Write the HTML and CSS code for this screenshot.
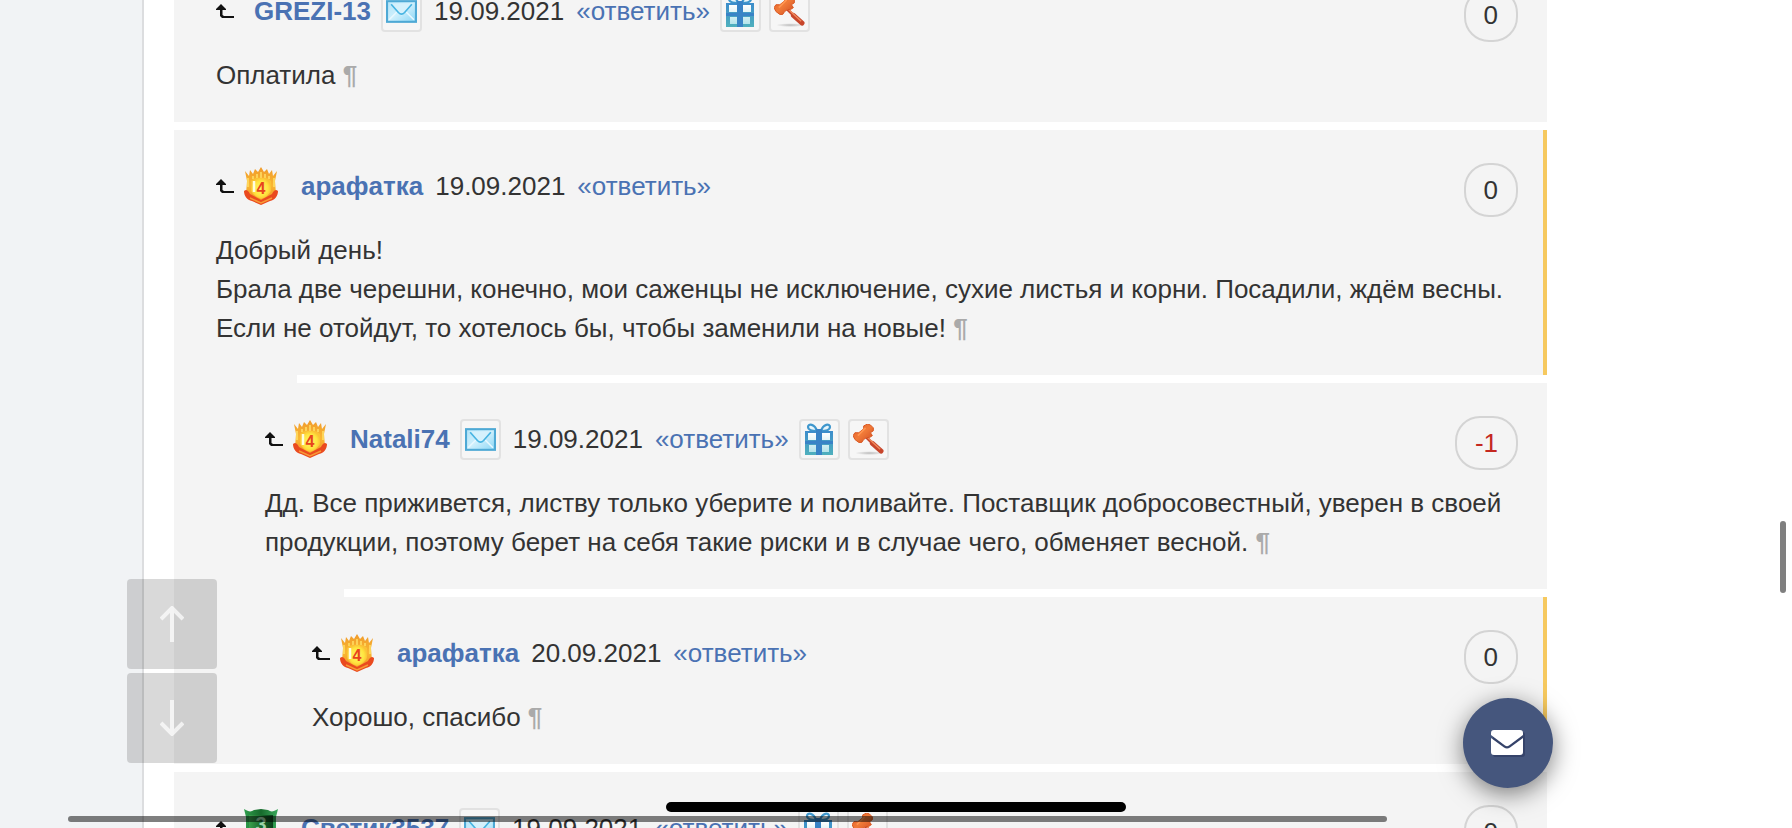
FILE: index.html
```html
<!DOCTYPE html>
<html lang="ru">
<head>
<meta charset="utf-8">
<title>Комментарии</title>
<link rel="stylesheet" href="styles.css">
</head>
<body>
<svg class="defs" aria-hidden="true">
  <defs>
    <linearGradient id="mailFill" x1="0" y1="0" x2="1" y2="1"><stop offset="0" stop-color="#b4e4f8"/><stop offset=".5" stop-color="#cdeffc"/><stop offset="1" stop-color="#8ad6f5"/></linearGradient>
    <linearGradient id="giftFill" x1="0" y1="0" x2="0" y2="1"><stop offset="0" stop-color="#3c8ccb"/><stop offset="1" stop-color="#4fb0bd"/></linearGradient>
    <linearGradient id="giftPane" x1="0" y1="0" x2="0" y2="1"><stop offset="0" stop-color="#ffffff"/><stop offset="1" stop-color="#b4e3ea"/></linearGradient>
    <linearGradient id="crest" x1="0" y1="0" x2="0" y2="1"><stop offset="0" stop-color="#f09a2a"/><stop offset=".5" stop-color="#f9b733"/><stop offset="1" stop-color="#f28a25"/></linearGradient>
    <radialGradient id="gold"><stop offset="0" stop-color="#fff36b"/><stop offset=".7" stop-color="#ffe53f"/><stop offset="1" stop-color="#fbc235"/></radialGradient>
    <linearGradient id="green" x1="0" y1="0" x2="1" y2="0"><stop offset="0" stop-color="#2f9e4d"/><stop offset=".5" stop-color="#176b2c"/><stop offset="1" stop-color="#39a95b"/></linearGradient>
    <linearGradient id="greenField" x1="0" y1="0" x2="1" y2="0"><stop offset="0" stop-color="#3aa04c"/><stop offset=".6" stop-color="#145f27"/><stop offset="1" stop-color="#0c3f1b"/></linearGradient>
    <linearGradient id="wood" x1="0" y1="0" x2="1" y2="1"><stop offset="0" stop-color="#e4602a"/><stop offset=".5" stop-color="#f07a38"/><stop offset="1" stop-color="#d04a22"/></linearGradient>
    <radialGradient id="shade"><stop offset="0" stop-color="#bbb"/><stop offset="1" stop-color="#bbb" stop-opacity="0"/></radialGradient>
    <symbol id="up" viewBox="0 0 18 14"><path d="M5 0 10 5V6H6.500V11L8 12H18V14H6L4 12V6H0V5Z"/></symbol>
    <symbol id="mail" viewBox="0 0 30 22">
      <rect x="1" y="1" width="28" height="20" fill="url(#mailFill)" stroke="#4ea9d5" stroke-width="2"/>
      <path d="M3 19 11 11M27 19 19 11" stroke="#e8f8ff" stroke-width="1.500"/>
      <path d="M4 3H26L15 15Z" fill="#d5f1fc"/>
      <path d="M5 4 12 12Q15 15 18 12L25 4" fill="none" stroke="#47b4e2" stroke-width="1.600"/>
    </symbol>
    <symbol id="gift" viewBox="0 0 28 32">
      <path d="M12 8C10 1 3 0 3 4c0 3 4 4 9 4M16 8c2-7 9-8 9-4 0 3-4 4-9 4" fill="#e7f5fb" stroke="#3f97cd" stroke-width="2.200"/>
      <rect x="0" y="8" width="28" height="24" fill="url(#giftFill)"/>
      <path d="M3 10H11V17H3ZM17 10H25V17H17ZM4 22H11V29H4ZM17 22H24V29H17Z" fill="url(#giftPane)"/>
      <path d="M11 6H17V32H11Z M0 18H28V21H0Z" fill="#3983c6"/>
    </symbol>
    <symbol id="gavel" viewBox="0 0 32 32">
      <ellipse cx="17" cy="30" rx="15" ry="2" fill="url(#shade)"/>
      <path d="M14 14 21 21" stroke="#c7452b" stroke-width="3"/>
      <path d="M20 20 29 28" stroke="#c7452b" stroke-width="5" stroke-linecap="round"/>
      <path d="M15 14 28 26" stroke="#f08a5c" stroke-width="1.500"/>
      <path d="M11 2 15 0 18 1 21 4 21 7 18 9 20 12 17 14 14 14 11 16 9 19 6 19 2 16 0 12 2 9 6 9 11 5Z" fill="url(#wood)" stroke="#d9561f" stroke-width="1"/>
      <path d="M5 12 13 4" stroke="#ff9550" stroke-width="2"/>
    </symbol>
    <symbol id="rank4" viewBox="0 0 34 38">
      <path d="M1 4 5 9 6 3 9 7 11 2 14 5 17 0 20 5 23 2 25 7 28 3 29 9 33 4 31 14 32 27 28 32 17 37 6 32 2 27 3 14Z" fill="url(#crest)"/>
      <path d="M9 9V12M13 7V11M17 5V11M21 7V11M25 9V12M4 11V20M30 11V20" stroke="#ffe066" stroke-width="1.500"/>
      <path d="M0 24C3 21 5 25 6 27L17 33 28 27C29 25 31 21 34 24 34 29 31 33 26 34L17 38 8 34C3 33 0 29 0 24Z" fill="#ea4a1f"/>
      <path d="M6 31 17 36 28 31" stroke="#f79a35" stroke-width="1.500" fill="none"/>
      <path d="M7 14Q11 10 17 11 23 10 27 14V24Q25 29 17 32 9 29 7 24Z" fill="url(#gold)"/>
      <path d="M10 14V25" stroke="#fffde0" stroke-width="2.500"/>
      <text x="17" y="27" class="rank-digit rank-digit-red">4</text>
    </symbol>
    <symbol id="rank3" viewBox="0 0 34 38">
      <path d="M0 0C5 3 7 3 10 1L17 0 24 1C27 3 29 3 34 0L32 8V26C32 32 22 33 17 38 12 33 2 32 2 26V8Z" fill="url(#green)"/>
      <path d="M5 6H29V26L17 33 5 26Z" fill="url(#greenField)"/>
      <text x="17" y="22" class="rank-digit rank-digit-pale">3</text>
    </symbol>
  </defs>
</svg>

<div class="page">
  <aside class="sidebar"></aside>
  <main class="thread">
    <article class="comment">
      <header class="head">
        <div class="meta">
          <a class="parent" href="#" aria-label="К родительскому"><svg class="i-up"><use href="#up"/></svg></a>
          <a class="name name-plain" href="#">GREZI-13</a>
          <button class="tool" aria-label="Написать"><svg class="i-mail"><use href="#mail"/></svg></button>
          <time>19.09.2021</time>
          <a class="reply" href="#">«ответить»</a>
          <button class="tool" aria-label="Подарок"><svg class="i-gift"><use href="#gift"/></svg></button>
          <button class="tool tool-next" aria-label="Жалоба"><svg class="i-gavel"><use href="#gavel"/></svg></button>
        </div>
        <span class="score">0</span>
      </header>
      <p class="text">Оплатила <a class="anchor" href="#">¶</a></p>
    </article>
    <div class="divider"></div>
    <article class="comment author">
      <header class="head">
        <div class="meta">
          <a class="parent" href="#" aria-label="К родительскому"><svg class="i-up"><use href="#up"/></svg></a>
          <svg class="rank"><use href="#rank4"/></svg>
          <a class="name" href="#">арафатка</a>
          <time>19.09.2021</time>
          <a class="reply" href="#">«ответить»</a>
        </div>
        <span class="score">0</span>
      </header>
      <p class="text">Добрый день!<br>Брала две черешни, конечно, мои саженцы не исключение, сухие листья и корни. Посадили, ждём весны. Если не отойдут, то хотелось бы, чтобы заменили на новые! <a class="anchor" href="#">¶</a></p>
    </article>
    <div class="divider divider-2"></div>
    <article class="comment level-2">
      <header class="head">
        <div class="meta">
          <a class="parent" href="#" aria-label="К родительскому"><svg class="i-up"><use href="#up"/></svg></a>
          <svg class="rank"><use href="#rank4"/></svg>
          <a class="name" href="#">Natali74</a>
          <button class="tool" aria-label="Написать"><svg class="i-mail"><use href="#mail"/></svg></button>
          <time>19.09.2021</time>
          <a class="reply" href="#">«ответить»</a>
          <button class="tool" aria-label="Подарок"><svg class="i-gift"><use href="#gift"/></svg></button>
          <button class="tool tool-next" aria-label="Жалоба"><svg class="i-gavel"><use href="#gavel"/></svg></button>
        </div>
        <span class="score negative">-1</span>
      </header>
      <p class="text">Дд. Все приживется, листву только уберите и поливайте. Поставщик добросовестный, уверен в своей продукции, поэтому берет на себя такие риски и в случае чего, обменяет весной. <a class="anchor" href="#">¶</a></p>
    </article>
    <div class="divider divider-3"></div>
    <article class="comment level-3 author">
      <header class="head">
        <div class="meta">
          <a class="parent" href="#" aria-label="К родительскому"><svg class="i-up"><use href="#up"/></svg></a>
          <svg class="rank"><use href="#rank4"/></svg>
          <a class="name" href="#">арафатка</a>
          <time>20.09.2021</time>
          <a class="reply" href="#">«ответить»</a>
        </div>
        <span class="score">0</span>
      </header>
      <p class="text">Хорошо, спасибо <a class="anchor" href="#">¶</a></p>
    </article>
    <div class="divider"></div>
    <article class="comment">
      <header class="head">
        <div class="meta">
          <a class="parent" href="#" aria-label="К родительскому"><svg class="i-up"><use href="#up"/></svg></a>
          <svg class="rank"><use href="#rank3"/></svg>
          <a class="name" href="#">Светик3537</a>
          <button class="tool" aria-label="Написать"><svg class="i-mail"><use href="#mail"/></svg></button>
          <time>19.09.2021</time>
          <a class="reply" href="#">«ответить»</a>
          <button class="tool" aria-label="Подарок"><svg class="i-gift"><use href="#gift"/></svg></button>
          <button class="tool tool-next" aria-label="Жалоба"><svg class="i-gavel"><use href="#gavel"/></svg></button>
        </div>
        <span class="score">0</span>
      </header>
    </article>
  </main>
</div>

<nav class="jump">
  <button class="jump-btn" aria-label="Наверх"><svg class="i-jump" viewBox="0 0 24 36"><path d="M12 36V2M1 13 12 2 23 13"/></svg></button>
  <button class="jump-btn" aria-label="Вниз"><svg class="i-jump" viewBox="0 0 24 36"><path d="M12 0V34M1 23 12 34 23 23"/></svg></button>
</nav>
<button class="chat" aria-label="Сообщения">
  <svg class="i-chat" viewBox="0 0 34 27"><path class="i-chat-shadow" d="M4 2H31Q34 2 34 5V24Q34 27 31 27H4Q2 27 2 24V5Q2 2 4 2Z"/><path fill="#fff" d="M3 0H29Q32 0 32 3V5L18 15.500Q16 17 14 15.500L0 5V3Q0 0 3 0ZM0 8 13 17.500Q16 19.500 19 17.500L32 8V22Q32 25 29 25H3Q0 25 0 22Z"/></svg>
</button>
<div class="home-bar"></div>
<div class="scroll-x"></div>
<div class="scroll-y"></div>
</body>
</html>
```
FILE: styles.css
```css
* { box-sizing: border-box; }

body {
  margin: 0;
  height: 100vh;
  overflow: hidden;
  background: #fff;
  color: #333;
  font: 26px/39px "Liberation Sans", Arial, sans-serif;
}

a { color: #4a72b3; text-decoration: none; }
button { padding: 0; border: 0; background: none; cursor: pointer; }
svg { display: block; flex: none; }

.defs { position: absolute; width: 0; height: 0; }

.page { display: flex; height: 100%; overflow: hidden; }

.sidebar {
  flex: 0 0 144px;
  background: #f1f3f5;
  border-right: 2px solid #dcdddf;
}

.thread {
  flex: 1;
  align-self: flex-start;
  margin: -45px 245px 0 30px;
  background: #f4f4f4;
}

.comment { padding: 33px 29px 27px 42px; }
.author { padding-right: 25px; border-right: 4px solid #f6c95f; }
.level-2 { padding-left: 91px; }
.level-3 { padding-left: 138px; }

.divider { height: 8px; background: #fff; }
.divider-2 { margin-left: 123px; }
.divider-3 { margin-left: 170px; }

.head {
  display: flex;
  justify-content: space-between;
  align-items: flex-start;
  margin-bottom: 14px;
}

.meta { display: flex; align-items: center; height: 46px; white-space: nowrap; }

.i-up { width: 18px; height: 14px; fill: #111; }
.rank { width: 34px; height: 38px; margin-left: 10px; }
.rank-digit { font: bold 16px "Liberation Sans", Arial, sans-serif; text-anchor: middle; }
.rank-digit-red { fill: #e8441c; }
.rank-digit-pale { font-size: 20px; fill: #9bd3a8; }

.name { margin-left: 23px; font-weight: bold; }
.name-plain { margin-left: 20px; }
time, .reply { margin-left: 12px; }

.tool {
  display: flex;
  align-items: center;
  justify-content: center;
  width: 41px;
  height: 41px;
  margin-left: 10px;
  border: 2px solid #e2e2e2;
  border-radius: 4px;
  background: #f6f6f6;
}
.tool-next { margin-left: 8px; }
.i-mail { width: 31px; height: 23px; }
.i-gift { width: 28px; height: 32px; }
.i-gavel { width: 31px; height: 31px; }

.score {
  height: 54px;
  padding: 0 18px;
  border: 2px solid #d4d4d4;
  border-radius: 25px;
  line-height: 51px;
}
.negative { color: #c4281f; }

.text { margin: 0; }
.anchor { color: #aaa; font-weight: bold; }

.jump {
  position: fixed;
  left: 127px;
  bottom: 65px;
  display: grid;
  gap: 4px;
}
.jump-btn {
  display: grid;
  place-items: center;
  width: 90px;
  height: 90px;
  border-radius: 4px;
  background: rgba(0, 0, 0, .15);
}
.i-jump { width: 24px; height: 36px; fill: none; stroke: rgba(255, 255, 255, .7); stroke-width: 4px; }

.chat {
  position: fixed;
  right: 239px;
  bottom: 40px;
  display: grid;
  place-items: center;
  width: 90px;
  height: 90px;
  border-radius: 50%;
  background: #45567d;
  box-shadow: 0 6px 24px rgba(0, 0, 0, .5);
}
.i-chat { width: 34px; height: 27px; }
.i-chat-shadow { fill: #35436a; }

.home-bar {
  position: fixed;
  left: 666px;
  right: 666px;
  bottom: 16px;
  height: 10px;
  border-radius: 5px;
  background: #000;
}
.scroll-x {
  position: fixed;
  left: 68px;
  right: 405px;
  bottom: 6px;
  height: 6px;
  border-radius: 3px;
  background: rgba(0, 0, 0, .5);
}
.scroll-y {
  position: fixed;
  right: 6px;
  top: 521px;
  width: 6px;
  height: 72px;
  border-radius: 3px;
  background: rgba(0, 0, 0, .5);
}
```
